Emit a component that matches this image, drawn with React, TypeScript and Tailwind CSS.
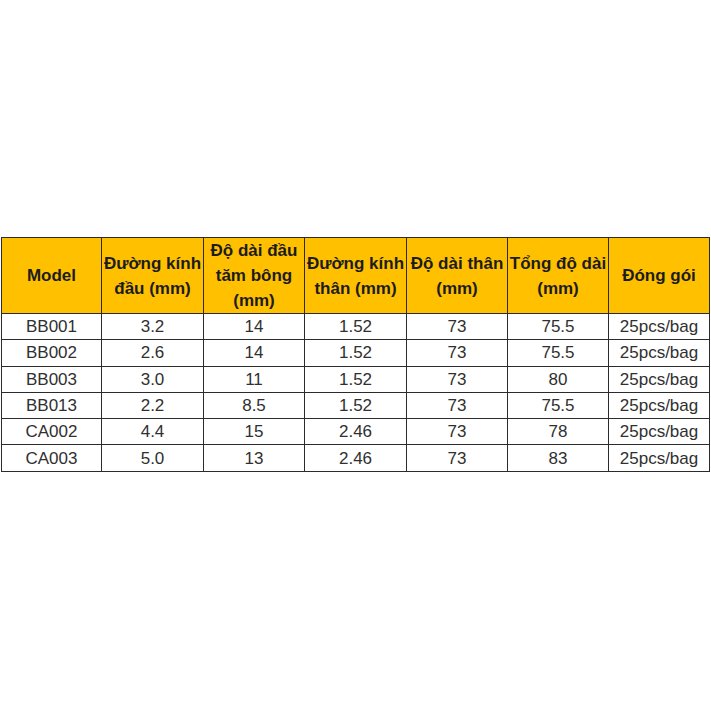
const headers: React.ReactNode[] = [
  "Model",
  <>Đường kính<br />đầu (mm)</>,
  <>Độ dài đầu<br />tăm bông<br />(mm)</>,
  <>Đường kính<br />thân (mm)</>,
  <>Độ dài thân<br />(mm)</>,
  <>Tổng độ dài<br />(mm)</>,
  "Đóng gói",
];

const rows = [
  ["BB001", "3.2", "14", "1.52", "73", "75.5", "25pcs/bag"],
  ["BB002", "2.6", "14", "1.52", "73", "75.5", "25pcs/bag"],
  ["BB003", "3.0", "11", "1.52", "73", "80", "25pcs/bag"],
  ["BB013", "2.2", "8.5", "1.52", "73", "75.5", "25pcs/bag"],
  ["CA002", "4.4", "15", "2.46", "73", "78", "25pcs/bag"],
  ["CA003", "5.0", "13", "2.46", "73", "83", "25pcs/bag"],
];

const widths = [100, 102, 101, 102, 101, 101, 101];

export default function App() {
  return (
    <div
      className="w-[711px] h-[711px] bg-white pt-[237px] pl-[1px]"
      style={{ fontFamily: '"Liberation Sans", Arial, sans-serif' }}
    >
      <table className="border-collapse table-fixed w-[709px] text-[17px] text-[#303030]">
        <colgroup>
          {widths.map((w, i) => (
            <col key={i} style={{ width: w }} />
          ))}
        </colgroup>
        <thead>
          <tr className="h-[76px] bg-[#ffc000]">
            {headers.map((h, i) => (
              <th
                key={i}
                className="border border-[#2b2b2b] p-0 text-center align-middle font-bold leading-[25px] whitespace-nowrap text-[#1c1c1c]"
              >
                {h}
              </th>
            ))}
          </tr>
        </thead>
        <tbody>
          {rows.map((r) => (
            <tr key={r[0]} className="h-[26.3px]">
              {r.map((c, i) => (
                <td
                  key={i}
                  className="border border-[#2b2b2b] p-0 text-center align-middle leading-[25px] whitespace-nowrap"
                >
                  {c}
                </td>
              ))}
            </tr>
          ))}
        </tbody>
      </table>
    </div>
  );
}
